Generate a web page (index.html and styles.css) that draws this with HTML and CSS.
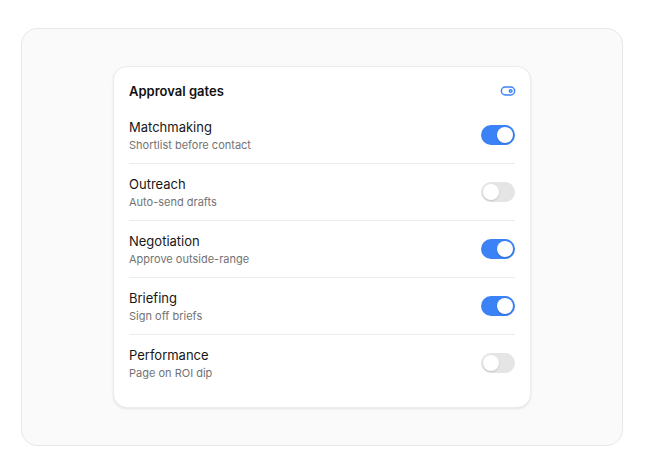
FILE: index.html
```html
<!DOCTYPE html>
<html lang="en">
<head>
<meta charset="utf-8">
<title>Approval gates</title>
<link rel="stylesheet" href="styles.css">
</head>
<body>
<div class="panel">
  <div class="card">
    <div class="card-header">
      <h2 class="card-title">Approval gates</h2>
      <svg class="header-icon" width="16" height="16" viewBox="0 0 24 24" fill="none" stroke="currentColor" stroke-width="2.2" stroke-linecap="round" stroke-linejoin="round"><rect x="2" y="6" width="20" height="12" rx="6"/><circle cx="16" cy="12" r="2"/></svg>
    </div>
    <ul class="gate-list">
      <li class="gate">
        <div class="gate-text"><div class="gate-name">Matchmaking</div><div class="gate-desc">Shortlist before contact</div></div>
        <span class="switch on"><span class="knob"></span></span>
      </li>
      <li class="gate">
        <div class="gate-text"><div class="gate-name">Outreach</div><div class="gate-desc">Auto-send drafts</div></div>
        <span class="switch"><span class="knob"></span></span>
      </li>
      <li class="gate">
        <div class="gate-text"><div class="gate-name">Negotiation</div><div class="gate-desc">Approve outside-range</div></div>
        <span class="switch on"><span class="knob"></span></span>
      </li>
      <li class="gate">
        <div class="gate-text"><div class="gate-name">Briefing</div><div class="gate-desc">Sign off briefs</div></div>
        <span class="switch on"><span class="knob"></span></span>
      </li>
      <li class="gate">
        <div class="gate-text"><div class="gate-name">Performance</div><div class="gate-desc">Page on ROI dip</div></div>
        <span class="switch"><span class="knob"></span></span>
      </li>
    </ul>
  </div>
</div>
</body>
</html>
```
FILE: styles.css
```css
* { box-sizing: border-box; }
html, body { margin: 0; padding: 0; background: #ffffff; }
body {
  font-family: Inter, "Noto Sans", sans-serif;
  color: #171717;
  padding: 28px 25px 24px 21px;
}
.panel {
  width: 602px;
  height: 418px;
  background: #fafafa;
  border: 1px solid #e8e8e8;
  border-radius: 16px;
  display: flex;
  align-items: center;
  justify-content: center;
}
.card {
  width: 418px;
  background: #ffffff;
  border: 1px solid #ececec;
  border-radius: 14px;
  box-shadow: 0 1px 3px rgba(0,0,0,0.06), 0 1px 2px rgba(0,0,0,0.04);
  padding: 15px 15px 16px 15px;
  margin-top: -1px;
}
.card-header {
  display: flex;
  align-items: center;
  justify-content: space-between;
  height: 18px;
  margin-bottom: 7px;
}
.card-title {
  margin: 0;
  font-size: 13px;
  line-height: 18px;
  font-weight: 600;
  color: #111111;
}
.header-icon { color: #3b82f6; display: block; margin-right: -1px; }
.gate-list { list-style: none; margin: 0; padding: 0; }
.gate {
  display: flex;
  align-items: center;
  justify-content: space-between;
  padding: 11px 0 10px;
  border-bottom: 1px solid #ececec;
}
.gate:last-child { border-bottom: none; }
.gate-name {
  font-size: 13px;
  line-height: 18px;
  font-weight: 400;
  color: #171717;
}
.gate-desc {
  margin-top: 1px;
  font-size: 11px;
  line-height: 16px;
  color: #737373;
}
.switch {
  position: relative;
  display: block;
  width: 34px;
  height: 20px;
  border-radius: 10px;
  background: #e5e5e5;
  margin-top: -1px;
}
.switch.on { background: #3b82f6; }
.knob {
  position: absolute;
  top: 2px;
  left: 2px;
  width: 16px;
  height: 16px;
  border-radius: 50%;
  background: #ffffff;
  box-shadow: 0 1px 2px rgba(0,0,0,0.15);
}
.switch.on .knob { left: 16px; }
```
